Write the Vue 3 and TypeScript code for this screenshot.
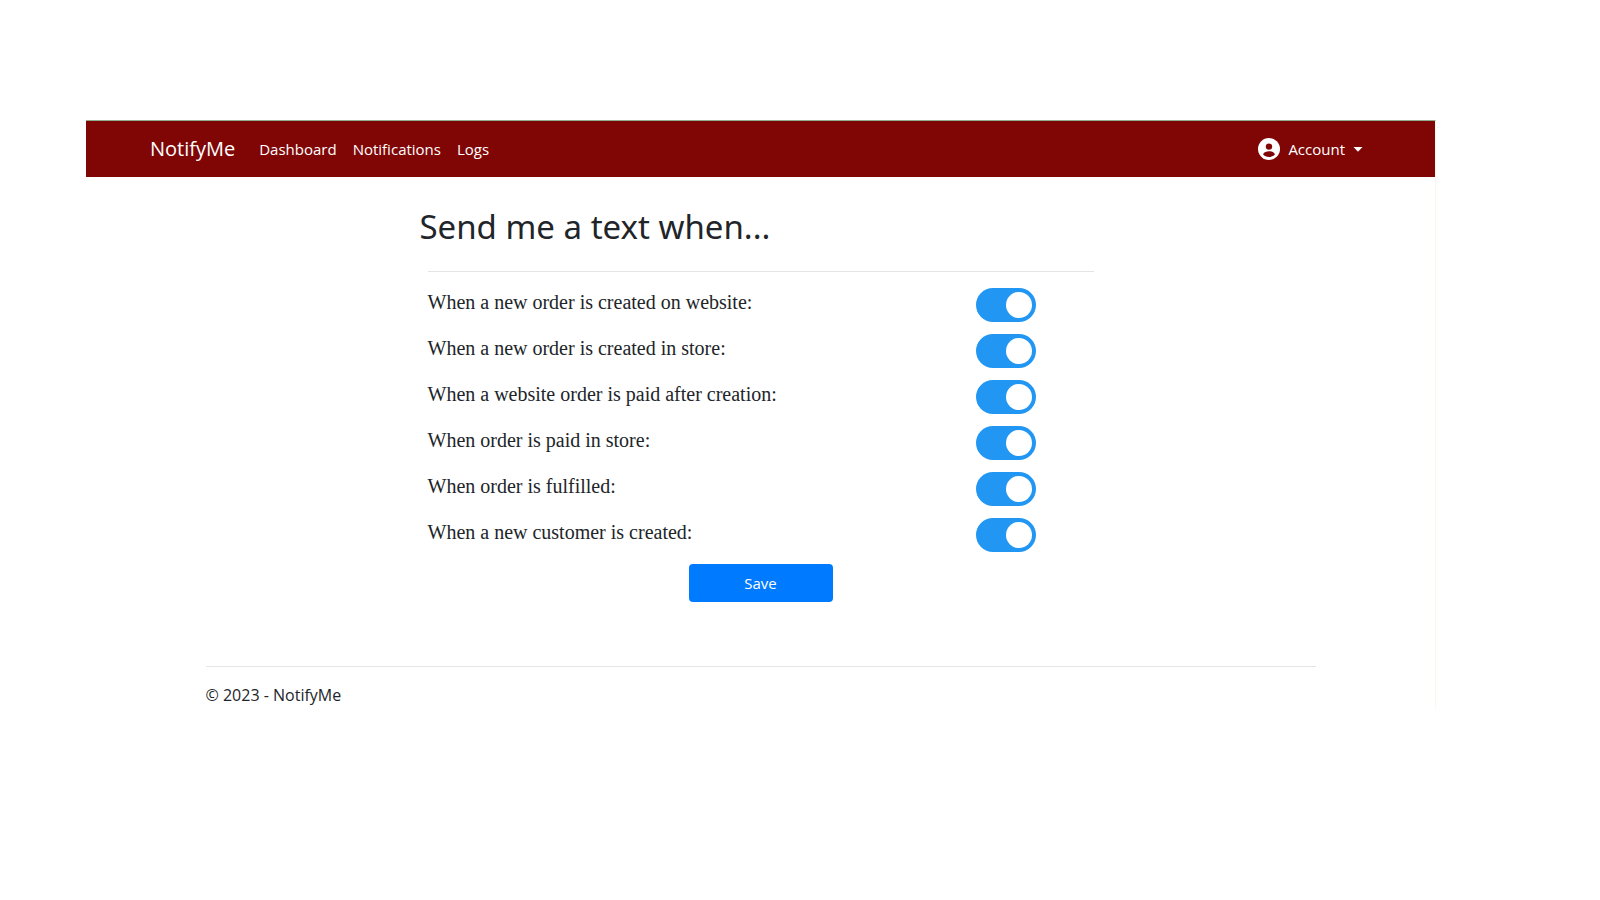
<script setup lang="ts">
import { ref } from 'vue'

interface Setting {
  id: string
  label: string
  enabled: boolean
}

const links: string[] = ['Dashboard', 'Notifications', 'Logs']

const settings = ref<Setting[]>([
  { id: 'order-website', label: 'When a new order is created on website:', enabled: true },
  { id: 'order-store', label: 'When a new order is created in store:', enabled: true },
  { id: 'paid-website', label: 'When a website order is paid after creation:', enabled: true },
  { id: 'paid-store', label: 'When order is paid in store:', enabled: true },
  { id: 'fulfilled', label: 'When order is fulfilled:', enabled: true },
  { id: 'customer', label: 'When a new customer is created:', enabled: true },
])
</script>

<template>
  <div class="page">
    <div class="site">
      <header class="navbar">
        <a class="brand" href="#">NotifyMe</a>
        <nav class="links">
          <a v-for="link in links" :key="link" href="#">{{ link }}</a>
        </nav>
        <button class="account" type="button" aria-haspopup="true">
          <svg class="avatar" viewBox="0 0 22 22" aria-hidden="true">
            <circle cx="11" cy="11" r="11" fill="#fff" />
            <circle cx="11" cy="8.6" r="3.2" fill="#800606" />
            <path d="M5 16.2C6.2 14 8.5 13.2 11 13.2s4.800.8 6 3C15.600 18 13.500 18.900 11 18.900S6.400 18 5 16.200z" fill="#800606" />
          </svg>
          <span>Account</span>
          <svg class="caret" viewBox="0 0 10 5" aria-hidden="true">
            <path d="M0.500 0h9L5 4.700z" fill="#fff" />
          </svg>
        </button>
      </header>

      <main class="content">
        <h1>Send me a text when...</h1>
        <form class="settings" @submit.prevent>
          <div v-for="item in settings" :key="item.id" class="row">
            <label :for="item.id">{{ item.label }}</label>
            <input :id="item.id" v-model="item.enabled" class="switch" type="checkbox" role="switch" />
          </div>
          <button class="save" type="submit">Save</button>
        </form>
      </main>

      <footer class="footer">© 2023 - NotifyMe</footer>
    </div>
  </div>
</template>

<style>
body {
  margin: 0;
  background: #fff;
}
</style>

<style scoped>
.page {
  padding: 120px 164px 0 86px;
  font-family: "Open Sans", "Noto Sans", sans-serif;
  font-size: 15px;
  line-height: 24px;
  color: #212529;
}

.site {
  border-top: 1px solid #8fae8f;
  border-right: 1px solid #f8f8ec;
}

.navbar {
  display: flex;
  align-items: center;
  height: 56px;
  padding: 0 72px 0 64px;
  background: #800606;
}

.navbar a {
  color: #fff;
  text-decoration: none;
}

.navbar .brand {
  margin-right: 24px;
  font-size: 20px;
}

.links {
  display: flex;
  gap: 16px;
}

.account {
  display: flex;
  align-items: center;
  margin-left: auto;
  padding: 0;
  border: 0;
  background: none;
  color: #fff;
  font: inherit;
}

.avatar {
  width: 22px;
  height: 22px;
  margin-right: 8px;
}

.caret {
  width: 10px;
  height: 5px;
  margin-left: 8px;
}

.content {
  max-width: 666px;
  margin: 0 auto;
  padding-top: 30px;
}

h1 {
  margin: 0 0 24px -8px;
  font-family: "Noto Sans", sans-serif;
  font-size: 33px;
  font-weight: 400;
  line-height: 40px;
}

.settings {
  display: flex;
  flex-direction: column;
  gap: 12px;
  padding-top: 16px;
  border-top: 1px solid #e4e4e4;
}

.row {
  display: grid;
  grid-template-columns: 1fr 118px;
  font-family: "Liberation Serif", serif;
  font-size: 20px;
  line-height: 28px;
}

.switch {
  appearance: none;
  display: flex;
  align-items: center;
  justify-content: flex-start;
  width: 60px;
  height: 34px;
  margin: 0;
  padding: 4px;
  box-sizing: border-box;
  border-radius: 17px;
  background: #ccc;
}

.switch::before {
  content: "";
  width: 26px;
  height: 26px;
  border-radius: 50%;
  background: #fff;
}

.switch:checked {
  justify-content: flex-end;
  background: #2196f3;
}

.save {
  align-self: center;
  width: 144px;
  height: 38px;
  padding: 0;
  border: 0;
  border-radius: 4px;
  background: #007bff;
  color: #fff;
  font: inherit;
}

.footer {
  max-width: 1110px;
  margin: 64px auto 0;
  padding: 16px 0 2px;
  border-top: 1px solid #e4e4e4;
  font-size: 16px;
}
</style>
